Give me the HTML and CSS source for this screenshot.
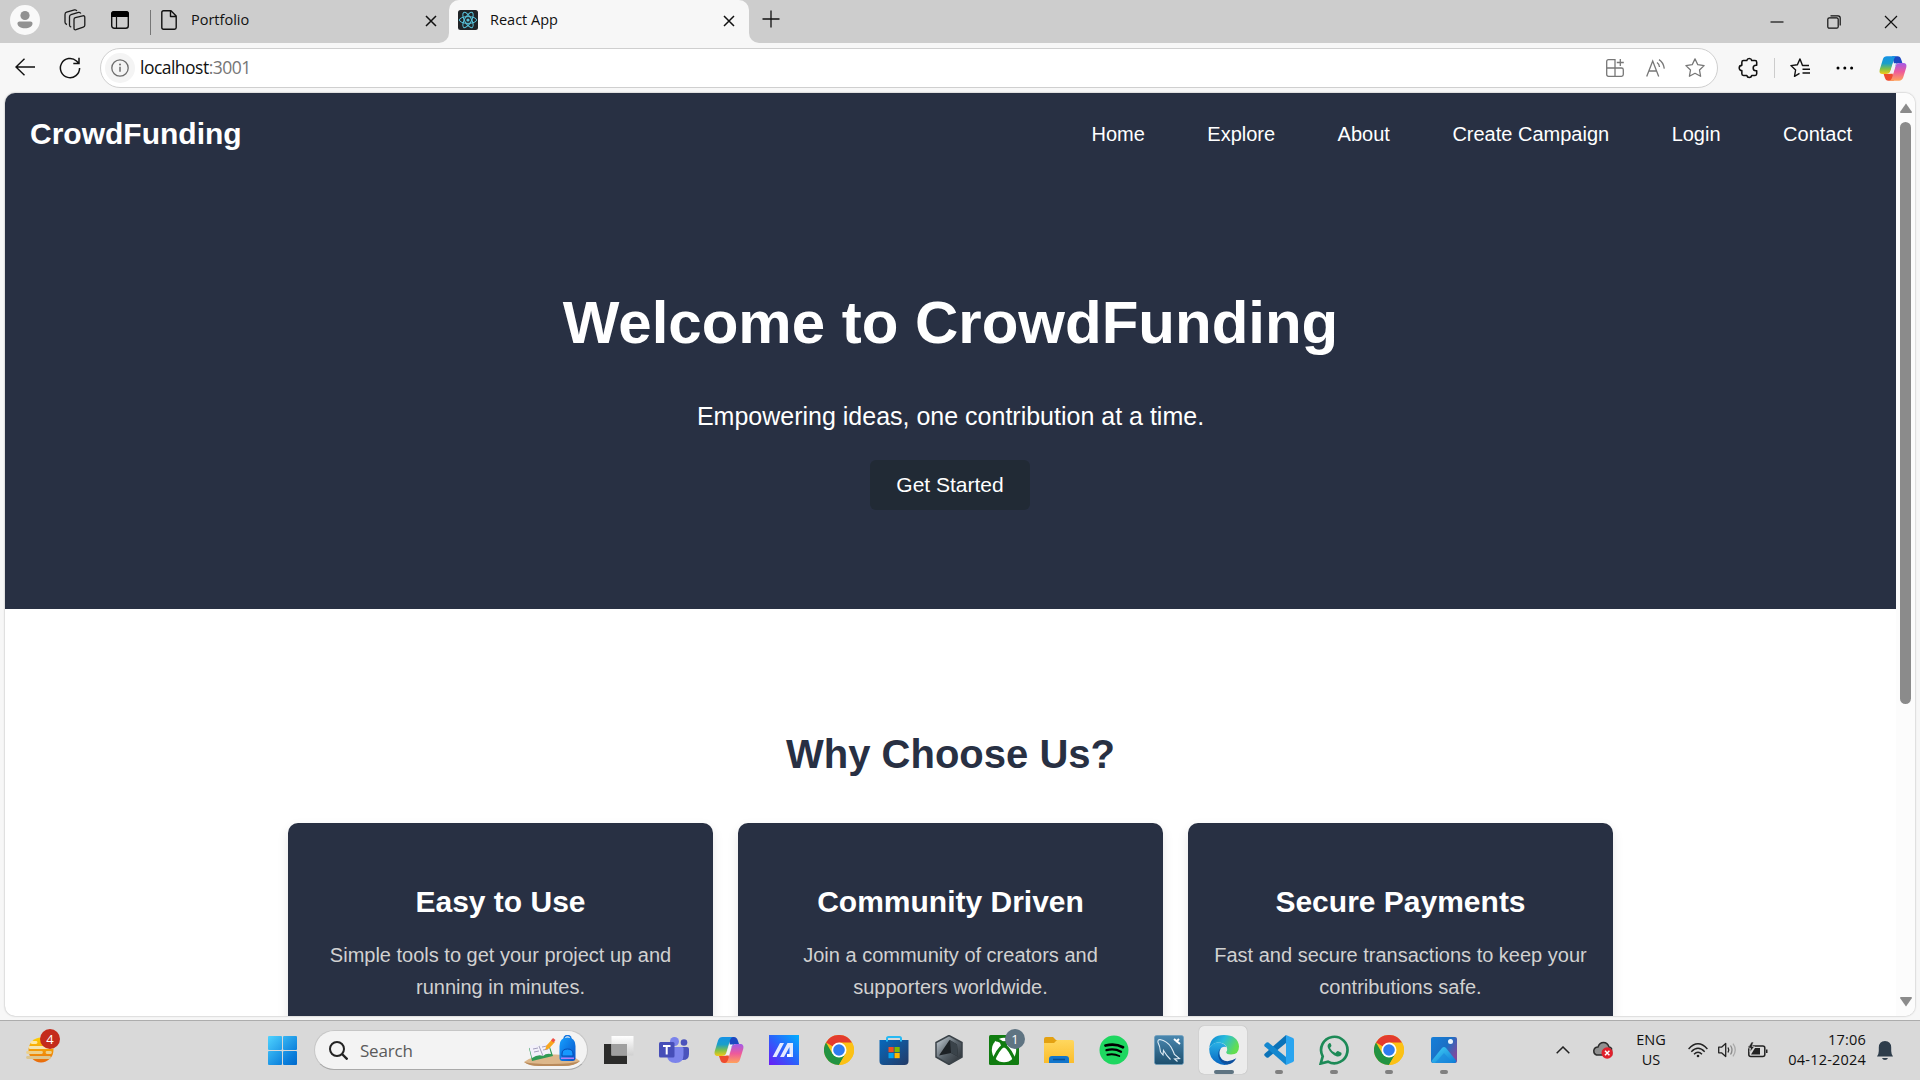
FILE: index.html
```html
<!DOCTYPE html>
<html lang="en">
<head>
<meta charset="utf-8">
<title>React App</title>
<link rel="stylesheet" href="styles.css">
</head>
<body>
<svg class="defs" aria-hidden="true">
  <defs>
    <linearGradient id="cpA" x1="0" y1="0" x2="0" y2="1"><stop offset="0" stop-color="#1592e6"/><stop offset=".4" stop-color="#1b9fc9"/><stop offset=".7" stop-color="#7fc04a"/><stop offset="1" stop-color="#f6c915"/></linearGradient>
    <linearGradient id="cpB" x1="0" y1="0" x2="0" y2="1"><stop offset="0" stop-color="#a25be8"/><stop offset=".5" stop-color="#ee5a9b"/><stop offset="1" stop-color="#ffa25c"/></linearGradient>
    <linearGradient id="win" gradientUnits="userSpaceOnUse" x1="0" y1="0" x2="29" y2="29"><stop offset="0" stop-color="#4fd3ff"/><stop offset=".75" stop-color="#0a7edb"/><stop offset="1" stop-color="#0069cc"/></linearGradient>
    <linearGradient id="ma" x1="0" y1="1" x2="1" y2="0"><stop offset="0" stop-color="#6a1cf5"/><stop offset=".5" stop-color="#2a62fb"/><stop offset="1" stop-color="#00b0ff"/></linearGradient>
    <linearGradient id="sun" x1="0" y1="0" x2="0" y2="1"><stop offset="0" stop-color="#ffcf05"/><stop offset="1" stop-color="#e8690c"/></linearGradient>
    <linearGradient id="store" x1="0" y1="0" x2="1" y2="1"><stop offset="0" stop-color="#0669bd"/><stop offset="1" stop-color="#233a66"/></linearGradient>
    <linearGradient id="folder" x1="0" y1="0" x2="0" y2="1"><stop offset="0" stop-color="#ffd75e"/><stop offset="1" stop-color="#fbbd2c"/></linearGradient>
    <linearGradient id="sql" x1="0" y1="0" x2="0" y2="1"><stop offset="0" stop-color="#4a88b0"/><stop offset="1" stop-color="#1d4f6e"/></linearGradient>
    <linearGradient id="edgeTop" x1="0" y1="0" x2="1" y2=".4"><stop offset="0" stop-color="#0c7fd0"/><stop offset=".5" stop-color="#28bbdc"/><stop offset="1" stop-color="#62de50"/></linearGradient>
    <linearGradient id="edgeBody" x1="0" y1="0" x2="0" y2="1"><stop offset="0" stop-color="#29b1e6"/><stop offset="1" stop-color="#0664c0"/></linearGradient>
    <linearGradient id="photo" x1="0" y1="0" x2="1" y2=".6"><stop offset="0" stop-color="#157fd9"/><stop offset=".6" stop-color="#1c6fc4"/><stop offset="1" stop-color="#7e4a9e"/></linearGradient>
    <linearGradient id="mount" x1="0" y1="0" x2="1" y2="1"><stop offset="0" stop-color="#43d4f8"/><stop offset="1" stop-color="#0d79d4"/></linearGradient>
    <linearGradient id="crate" x1="0" y1="0" x2="1" y2="1"><stop offset="0" stop-color="#d3dce3"/><stop offset=".5" stop-color="#59636b"/><stop offset="1" stop-color="#24292e"/></linearGradient>
    <linearGradient id="glass" x1="0" y1="0" x2="0" y2="1"><stop offset="0" stop-color="#fff"/><stop offset="1" stop-color="#d0d0d0"/></linearGradient>
    <linearGradient id="bag" x1="0" y1="0" x2="1" y2="1"><stop offset="0" stop-color="#16a0ff"/><stop offset="1" stop-color="#0751c8"/></linearGradient>
    <symbol id="copilot" viewBox="0 0 30 28">
      <path d="M14 1h6c2 0 3 1 4 4l1 3h-3c-3 0-4 2-5 4z" fill="#1c48c2"/>
      <path d="M16 27H10c-2 0-3-1-4-4l-1-3h5c2 0 3-1 4-4z" fill="#ee4c2f"/>
      <path d="M8.500 1H19c-2 .5-2.700 2-3.400 4.500L12.500 16c-.8 3-2.500 4-5 4H4c-3 0-4-2-3.200-5L4 4.600C4.800 2 6.300 1 8.500 1z" fill="url(#cpA)"/>
      <path d="M21.500 27H11c2-.5 2.700-2 3.400-4.500L17.500 12c.8-3 2.500-4 5-4H26c3 0 4 2 3.200 5L26 23.400c-.8 2.600-2.300 3.600-4.500 3.600z" fill="url(#cpB)"/>
      <path d="M15.200 8.500h4.200c-1.300.6-1.800 2-2.300 3.500l-2.300 7.500h-4.200c1.300-.6 1.700-1.800 2.200-3.300z" fill="#f2f2f5"/>
    </symbol>
    <symbol id="chrome" viewBox="0 0 30 30">
      <circle cx="15" cy="15" r="15" fill="#fbc116"/>
      <path d="M15 15 2 7.500A15 15 0 0 1 28 7.500z" fill="#e33b2e"/>
      <path d="M2 7.500A15 15 0 0 0 15 30l6.500-11.300L15 15 8.500 18.700z" fill="#229342"/>
      <path d="M15 7.500h13A15 15 0 0 1 15 30l6.500-11.300z" fill="#fbc116"/>
      <circle cx="15" cy="15" r="7.500" fill="#fff"/><circle cx="15" cy="15" r="5.800" fill="#2f7cf0"/>
    </symbol>
    <symbol id="x" viewBox="0 0 12 12"><path d="M1 1l10 10M11 1 1 11" fill="none" stroke="#111" stroke-width="1.500"/></symbol>
  </defs>
</svg>

<header class="tabstrip">
  <div class="tools">
    <svg class="avatar" viewBox="0 0 30 30"><circle cx="15" cy="15" r="15" fill="#f9f9f9"/><circle cx="15" cy="10.500" r="4.600" fill="#929292"/><path d="M9.500 16.500h11c1.200 0 2 .8 2 1.900 0 2.900-3.300 4.900-7.500 4.900s-7.500-2-7.500-4.900c0-1.100.8-1.900 2-1.900z" fill="#929292"/></svg>
    <svg class="i22 spaces" viewBox="0 0 22 22" fill="none" stroke="#1a1a1a" stroke-width="1.300" stroke-linejoin="round"><path d="M11.300 8.700 18.800 6.800q2-.4 2 1.600v7.800q0 1.400-1.500 1.900l-7.300 2.600q-2 .5-2-1.500v-8.700q0-1.500 1.300-1.800z"/><path d="M7.200 18q-1.700-.3-1.700-2V7.700q0-1.600 1.500-2L14.500 3.400q1.700-.4 2.300 1.200M3 15.500Q1 15 1 13.300V5.500q0-1.800 1.600-2.300l7.900-2.300Q12.200.5 12.900 2"/></svg>
    <svg class="i18 vtabs" viewBox="0 0 18 18"><rect x=".7" y=".7" width="16.600" height="16.600" rx="2.500" fill="none" stroke="#111" stroke-width="1.400"/><path d="M0 6V3q0-3 3-3h12q3 0 3 3v3z" fill="#000"/><path d="M5.500 5v12" stroke="#111" stroke-width="1.200"/></svg>
    <span class="divider"></span>
  </div>
  <div class="tab">
    <svg class="page" viewBox="0 0 16 20" fill="none" stroke="#111" stroke-width="1.400" stroke-linejoin="round"><path d="M2.500.8H10l5.200 5.200v11.500q0 1.700-1.700 1.700h-11Q.8 19.200.8 17.500v-15Q.8.8 2.500.8zM9.500 1v5.500H15"/></svg>
    <span class="title">Portfolio</span>
    <svg class="close"><use href="#x"/></svg>
  </div>
  <div class="tab active">
    <svg class="fav" viewBox="0 0 20 20"><rect width="20" height="20" rx="2.500" fill="#202427"/><g fill="none" stroke="#58c4dc" stroke-width="1"><ellipse cx="10" cy="10" rx="8.600" ry="3.400"/><ellipse cx="10" cy="10" rx="8.600" ry="3.400" transform="rotate(60 10 10)"/><ellipse cx="10" cy="10" rx="8.600" ry="3.400" transform="rotate(120 10 10)"/></g><circle cx="10" cy="10" r="1.600" fill="#58c4dc"/></svg>
    <span class="title">React App</span>
    <svg class="close"><use href="#x"/></svg>
  </div>
  <svg class="i18 plus" viewBox="0 0 18 18"><path d="M9 .5v17M.5 9h17" stroke="#111" stroke-width="1.300"/></svg>
  <div class="window">
    <svg viewBox="0 0 14 14"><path d="M.5 7h13" stroke="#111" stroke-width="1.200"/></svg>
    <svg viewBox="0 0 14 14" fill="none" stroke="#111" stroke-width="1.200"><rect x=".8" y="2.800" width="10.400" height="10.400" rx="1.500"/><path d="M3.500.8H11q2.200 0 2.200 2.200v7.500"/></svg>
    <svg viewBox="0 0 14 14"><path d="M1 1l12 12M13 1 1 13" stroke="#111" stroke-width="1.200"/></svg>
  </div>
</header>

<div class="toolbar">
  <svg class="back" viewBox="0 0 20 18" fill="none" stroke="#111" stroke-width="1.400"><path d="M20 9H1M9.500.7 1 9l8.500 8.300"/></svg>
  <svg class="reload" viewBox="0 0 22 22" fill="none" stroke="#111" stroke-width="1.500"><path d="M20.600 11A9.600 9.600 0 1 1 17.500 4l2 2M20 .8v5.700h-5.700"/></svg>
  <div class="address">
    <span class="site"><svg viewBox="0 0 18 18"><circle cx="9" cy="9" r="8.200" fill="none" stroke="#6d6d6d" stroke-width="1.300"/><path d="M9 7.800v5" stroke="#6d6d6d" stroke-width="1.500"/><circle cx="9" cy="5.500" r="1" fill="#6d6d6d"/></svg></span>
    <span class="url">localhost<span class="port">:3001</span></span>
    <svg class="i18 apps" viewBox="0 0 18 18" fill="none" stroke="#777" stroke-width="1.300"><path d="M9 17.300H2.500Q.7 17.300.7 15.500v-13Q.7.700 2.500.7H9zM.7 9h14.800q1.800 0 1.800 1.800v4.700q0 1.800-1.800 1.800H9M14.300 0v7M10.800 3.500h7"/></svg>
    <svg class="read" viewBox="0 0 20 18" fill="none" stroke="#777" stroke-width="1.300"><path d="M.7 17.500 6.700 2l6 15.500M2.700 12h8M11 3.500q2.300 1.500 2.500 4.500M13 .6q4.500 2.800 5.300 9"/></svg>
    <svg class="star" viewBox="0 0 20 20" fill="none" stroke="#777" stroke-width="1.300" stroke-linejoin="round"><path d="M10 .9l2.800 5.800 6.300.9-4.600 4.400 1.100 6.300L10 15.300l-5.600 3 1.100-6.300L.9 7.600l6.300-.9z"/></svg>
  </div>
  <svg class="ext" viewBox="0 0 20 20" fill="none" stroke="#111" stroke-width="1.400" stroke-linejoin="round"><path d="M5 3.200H8A2.300 2.300 0 0 1 12.500 3.200H15.500q1.500 0 1.500 1.500V7.500h-.7a2.500 2.500 0 0 0 0 5h.7v2.800q0 1.500-1.500 1.500H12.500a2.300 2.300 0 0 1-4.500 0H5q-1.500 0-1.500-1.500V12.400a2.400 2.400 0 0 1 0-4.800V4.700q0-1.500 1.500-1.500z"/></svg>
  <span class="bar"></span>
  <svg class="favs" viewBox="0 0 20 20" fill="none" stroke="#111" stroke-width="1.400" stroke-linejoin="round"><path d="M19 7.500h-6.500L10 .9 7.400 6.700l-6.500.9 4.700 4.400-1.100 6.300 5-3M12.500 11.300H20M12.500 15H20"/></svg>
  <svg class="dots" viewBox="0 0 18 4"><circle cx="2" cy="2" r="1.500"/><circle cx="8.800" cy="2" r="1.500"/><circle cx="15.600" cy="2" r="1.500"/></svg>
  <svg class="cp"><use href="#copilot"/></svg>
</div>

<div class="frame">
  <main class="site-page">
    <section class="hero">
      <nav class="nav">
        <span class="logo">CrowdFunding</span>
        <ul class="links"><li>Home</li><li>Explore</li><li>About</li><li>Create Campaign</li><li>Login</li><li>Contact</li></ul>
      </nav>
      <h1>Welcome to CrowdFunding</h1>
      <p class="lead">Empowering ideas, one contribution at a time.</p>
      <button class="cta">Get Started</button>
    </section>
    <section class="features">
      <h2>Why Choose Us?</h2>
      <div class="cards">
        <article class="card"><h3>Easy to Use</h3><p>Simple tools to get your project up and running in minutes.</p></article>
        <article class="card"><h3>Community Driven</h3><p>Join a community of creators and supporters worldwide.</p></article>
        <article class="card"><h3>Secure Payments</h3><p>Fast and secure transactions to keep your contributions safe.</p></article>
      </div>
    </section>
  </main>
  <div class="scrollbar">
    <svg viewBox="0 0 12 10"><path d="M6 .5 12 9q0 1-1 1H1Q0 10 0 9z" fill="#8b8b8b"/></svg>
    <span class="thumb"></span>
    <svg viewBox="0 0 12 10"><path d="M6 9.500 12 1q0-1-1-1H1Q0 0 0 1z" fill="#8b8b8b"/></svg>
  </div>
</div>

<footer class="taskbar">
  <div class="widget">
    <svg viewBox="0 0 28 26"><circle cx="15" cy="13" r="12.500" fill="url(#sun)"/><g stroke-linecap="round" stroke-width="2.800" fill="none"><path d="M6 5.500h4" stroke="#ffe9a0"/><path d="M4 10.500h22" stroke="#f5e5b0"/><path d="M1.500 15.500h14M21 15.500h3.500" stroke="#ecd08c"/><path d="M1.500 20.500h22" stroke="#ddc68f"/></g></svg>
    <span class="count">4</span>
  </div>
  <div class="cell"><svg class="i29" viewBox="0 0 29 29" fill="url(#win)"><rect width="14" height="14" rx="1"/><rect x="15" width="14" height="14" rx="1"/><rect y="15" width="14" height="14" rx="1"/><rect x="15" y="15" width="14" height="14" rx="1"/></svg></div>
  <div class="search">
    <svg class="glass" viewBox="0 0 19 19" fill="none" stroke="#222" stroke-width="2"><circle cx="8" cy="8" r="7"/><path d="M13 13l5.500 5.500" stroke-width="2.400"/></svg>
    <span>Search</span>
    <svg class="school" viewBox="0 0 58 32"><path d="M1 27Q10 20 30 19.500T57 26Q52 31 40 31H16Q6 31 1 27z" fill="#dcb78b"/><path d="M1 27q9 2 28 2t28-3q-5 5-17 5H16Q6 31 1 27z" fill="#b98a5b"/><path d="M6 13l20-4 4 12-21 5z" fill="#2f9a55"/><path d="M6 11q6-3 10 0 4-4 9-3l3 11q-5-1-8 2-5-2-11 2z" fill="#f2f0fa"/><path d="M16 11l4 10M10 14l5-1M11 17l5-1M19 12l5-1M20 15l5-1" stroke="#a49fbd" fill="none"/><path d="M22 15l1.500-4.500L29 4.500l3 2.500-6 6.500z" fill="#f9a61c"/><path d="M28 5.500 30 3l2.500 2-2 2.500z" fill="#ef5148"/><path d="M41 4q0-3.500 3.500-3.500T48 4" fill="none" stroke="#1677e0" stroke-width="1.500"/><path d="M36.500 11q0-8.500 8-8.500t8 8.500v12q0 3-3 3h-10q-3 0-3-3z" fill="url(#bag)"/><path d="M39 19q0-5 5.500-5t5.500 5v2H39z" fill="#1698ff" stroke="#074cb5"/><path d="M38 22.500h13v1.500H38z" fill="#b47cf5"/></svg>
  </div>
  <div class="cell"><svg class="i30" viewBox="0 0 30 30"><path d="M0 9h23v20H0z" fill="#2c2c2b"/><path d="M7.500 1h22v19.500h-22z" fill="url(#glass)"/><path d="M7.500 9H23v11.500H7.500z" fill="#a0a0a0"/></svg></div>
  <div class="cell"><svg class="i30" viewBox="0 0 30 30"><circle cx="25" cy="7.500" r="3.300" fill="#4b53bc"/><path d="M20 12h8q2 0 2 2v5q0 6-6 6h-4z" fill="#4b53bc"/><circle cx="15.500" cy="6.500" r="4.500" fill="#7b83eb"/><path d="M9 12h14q1.500 0 1.500 1.500V20q0 8-8 8T8 20v-8z" fill="#7b83eb"/><rect y="7" width="15.500" height="15.500" rx="1.500" fill="#464eb8"/><path d="M4 11h7.500M7.700 11v8.500" stroke="#fff" stroke-width="2"/></svg></div>
  <div class="cell"><svg class="i30"><use href="#copilot"/></svg></div>
  <div class="cell"><svg class="i30" viewBox="0 0 30 30"><rect width="30" height="30" fill="url(#ma)"/><path d="M3.500 22 11 8h4L7.500 22zM11 22l7.500-14H24v14h-3.500V12L15 22z" fill="#e4eaff"/><path d="M18 19h4v3h-4z" fill="#fff"/></svg></div>
  <div class="cell"><svg class="i30"><use href="#chrome"/></svg></div>
  <div class="cell"><svg class="i30" viewBox="0 0 30 30"><path d="M8 7V3.500Q8 2 9.500 2h11Q22 2 22 3.500V7" fill="none" stroke="#27b9f3" stroke-width="2"/><path d="M.5 5h29v21q0 4-4 4h-21q-4 0-4-4z" fill="url(#store)"/><path d="M8 5v1.500M22 5v1.500" stroke="#27b9f3" stroke-width="2"/><path d="M9.500 12h5.200v5.200H9.500z" fill="#f25022"/><path d="M15.500 12h5.200v5.200h-5.200z" fill="#7fba00"/><path d="M9.500 18h5.200v5.200H9.500z" fill="#00a4ef"/><path d="M15.500 18h5.200v5.200h-5.200z" fill="#ffb900"/></svg></div>
  <div class="cell"><svg class="i30" viewBox="0 0 30 30"><path d="M15 .5 28 7.500v14.500L15 29.500 2 22V7.500z" fill="url(#crate)"/><path d="M15.500 5 5 20.500l12-2.500 7 3.500-1-12z" fill="#1c2125"/><path d="M16 5l1 13 7 3.500-1-12z" fill="#3a434a"/><path d="M15 .5 28 7.500v14.500L15 29.500 2 22V7.500z" fill="none" stroke="#3a4248" stroke-width="1.500"/></svg></div>
  <div class="cell"><svg class="i30" viewBox="0 0 30 30"><rect width="30" height="30" rx="1.500" fill="#107c10"/><circle cx="15" cy="15" r="12.200" fill="#fff"/><g fill="none" stroke="#107c10"><path d="M4.500 26Q8 15 15 10q7 5 10.500 16" stroke-width="3"/><path d="M7 5q4 0 8 4.500Q19 5 23 5" stroke-width="3"/></g><path d="M11 7.500 15 6l4 1.500-1.500 5h-5z" fill="#107c10"/></svg><span class="badge">1</span></div>
  <div class="cell"><svg class="i30" viewBox="0 0 30 30"><path d="M0 4q0-2 2-2h7l3 3h10v7H0z" fill="#e3a112"/><path d="M0 8h10l3-3h15q2 0 2 2v21H0z" fill="url(#folder)"/><path d="M5 28v-4q0-3 3-3h14q3 0 3 3v4z" fill="#1276cc"/><path d="M9 24.500h12" stroke="#084f93" stroke-width="1.500"/></svg></div>
  <div class="cell"><svg class="i30" viewBox="0 0 30 30"><circle cx="15" cy="15" r="14.500" fill="#1ed760"/><g fill="none" stroke="#000" stroke-linecap="round"><path d="M6.500 10.500q9.500-2.500 17.500 1.700" stroke-width="2.800"/><path d="M7.500 15.200q8-2 14.500 1.500" stroke-width="2.300"/><path d="M8.300 19.700q6.500-1.500 12 1.300" stroke-width="1.900"/></g></svg></div>
  <div class="cell"><svg class="i30" viewBox="0 0 30 30"><rect x=".5" y=".5" width="29" height="29" rx="2" fill="url(#sql)" stroke="#6c9dbd" stroke-width=".7"/><path d="M6.500 17Q6 11 4 7.500 3.500 4.500 6 4.500 13 6 17 12q2.500 4.500 3.500 7.500l5 4-5 .5 3 2.500M6.500 17l2.500 3 .5-4.500q3 5 7 9" fill="none" stroke="#dfecf5" stroke-width="1.100"/><path d="M20 4l6 5M25 4l-3 3" stroke="#fff" stroke-width="2"/></svg></div>
  <div class="cell current"><svg class="i30" viewBox="0 0 30 30"><path d="M.3 13Q1.500 0 15 0q14 0 15 11.500 0 8-8 8-5 0-4.800-2.500Q19 15 17.500 11.500 15 7.500 9 7.500 3 8 .3 13z" fill="url(#edgeTop)"/><path d="M.2 13.500Q2.500 7.500 9.500 7.500q6 .5 8 4.500-5.500-1-7 4Q9.500 24 19 29.500 13 31 7.500 27.500 0 23 .2 13.500z" fill="url(#edgeBody)"/><path d="M12 13q-4.500 6.500 1 11.500 5.500 4 14.300-1.200Q24 29 18.500 29.600 10.500 28 9.200 21 8.800 15.500 12 13z" fill="#0c4f9e"/></svg><i class="run wide"></i></div>
  <div class="cell"><svg class="i30" viewBox="0 0 30 30"><path d="M22 0v8L4.500 22.500q-1 .7-2 0L.6 20.800q-.8-1 0-2z" fill="#0a72b8"/><path d="M22 30v-8L4.500 7.500q-1-.7-2 0L.6 9.200q-.8 1 0 2z" fill="#1387cf"/><path d="M22 0l7 3q1 .6 1 1.800v20.400q0 1.200-1 1.800l-7 3z" fill="#2aa5f0"/></svg><i class="run"></i></div>
  <div class="cell"><svg class="i30" viewBox="0 0 30 30"><path d="M1.700 28.500 3.700 21.300A13.200 13.200 0 1 1 9 26.600z" fill="none" stroke="#1d8a57" stroke-width="2.700"/><path d="M10.500 8q-2.800 1.500-1.500 5 3 6.500 9 8.500 3.500.5 4.500-2 .3-1.800-.5-2l-3-1.500q-.7-.2-1.200.5L16.500 18q-4-1.500-5.500-5l1.300-1.800q.2-.7 0-1.200l-.8-1.700q-.3-.5-1-.3z" fill="#1d8a57"/></svg><i class="run"></i></div>
  <div class="cell"><svg class="i30"><use href="#chrome"/></svg><i class="run"></i></div>
  <div class="cell"><svg class="i30" viewBox="0 0 30 30"><rect x="2" y="2" width="26" height="26" rx="2" fill="url(#photo)"/><path d="M2.500 26 13 13q2-2 4 0L27.500 26q-.5 2-2 2h-21q-1.500 0-2-2z" fill="url(#mount)"/><path d="M15 18 6 28h18z" fill="#1b86db" opacity=".6"/><circle cx="21.500" cy="6.500" r="2.500" fill="#e9f3fb"/></svg><i class="run"></i></div>
  <div class="tray">
    <svg class="chev" viewBox="0 0 14 8"><path d="M.7 7.300 7 1l6.300 6.300" fill="none" stroke="#222" stroke-width="1.500"/></svg>
    <svg class="cloud" viewBox="0 0 20 18"><path d="M3.500 14Q.6 13 .8 9.500 1.500 6 5 6 6.500 1.500 10.500 1.500T16 6q1.500 0 2.500 1.500V14z" fill="#909090" stroke="#2d2d2d" stroke-width="1.500"/><circle cx="14.200" cy="12" r="5.700" fill="#e0202c"/><path d="M12 9.800l4.400 4.400M16.400 9.800 12 14.200" stroke="#fff" stroke-width="1.500"/></svg>
    <div class="lang">ENG<br>US</div>
    <svg class="wifi" viewBox="0 0 20 15" fill="none" stroke="#222" stroke-width="1.400"><path d="M.6 6Q10-4.500 19.400 6M3.300 8.700q6.700-7 13.400 0M6 11.300q4-4 8 0"/><circle cx="10" cy="13" r="1.300" fill="#222" stroke="none"/></svg>
    <svg class="vol" viewBox="0 0 20 16" fill="none" stroke="#222" stroke-width="1.300" stroke-linejoin="round"><path d="M.7 5.200H3.500L7.700 1.500v13L3.500 10.800H.7zM10 5.500q1.600 2.500 0 5"/><path d="M12.500 3.500q3 4.500 0 9" stroke="#888"/><path d="M15 1.700q4.500 6.300 0 12.600" stroke="#aaa"/></svg>
    <svg class="batt" viewBox="0 0 20 16"><rect x=".8" y="4" width="16" height="10.500" rx="2" fill="none" stroke="#222" stroke-width="1.500"/><path d="M18 7.500h1.500v3.500H18z" fill="#222"/><path d="M3 12.500 7 6h5v6.500z" fill="#222"/><path d="M3.500 0 0 6h2.500L2 10l4.500-5.500H4L5.500 0z" fill="#222" stroke="#d9d9d9" stroke-width=".6"/></svg>
    <div class="clock">17:06<br>04-12-2024</div>
    <svg class="bell" viewBox="0 0 16 19"><path d="M0 15.500Q1.800 13 1.800 10V6.500Q2 0 8 0t6.200 6.500V10q0 3 1.800 5.500zM5 17h6q-.7 2-3 2t-3-2z" fill="#2e3d4b"/></svg>
  </div>
</footer>
</body>
</html>
```
FILE: styles.css
```css
* { box-sizing: border-box; }
body {
  margin: 0;
  width: 1920px;
  height: 1080px;
  overflow: hidden;
  display: flex;
  flex-direction: column;
  background: #f7f7f7;
  font-family: "Open Sans", "Noto Sans", sans-serif;
  color: #111;
}
svg { display: block; flex: none; }
.defs { position: absolute; width: 0; height: 0; }
.i18 { width: 18px; height: 18px; }
.i22 { width: 22px; height: 22px; }
.i29 { width: 29px; height: 29px; }
.i30 { width: 30px; height: 30px; }

/* Tab strip */
.tabstrip { height: 43px; display: flex; background: #f7f7f7; }
.tools { width: 155px; height: 43px; padding-left: 10px; padding-bottom: 3px; display: flex; align-items: center; background: #cdcdcd; }
.avatar { width: 30px; height: 30px; }
.spaces { margin-left: 24px; }
.vtabs { margin-left: 25px; }
.divider { width: 1px; height: 25px; margin-left: 21px; margin-top: 4px; background: #777; }
.tab { width: 294px; height: 43px; padding: 0 12px 3px 6px; display: flex; align-items: center; background: #cdcdcd; border-bottom-right-radius: 10px; font-size: 14.500px; }
.tab .title { flex: 1; padding-bottom: 2px; }
.page { width: 16px; height: 20px; margin-right: 14px; }
.close { width: 12px; height: 12px; margin-top: 1px; }
.tab.active { width: 300px; padding: 0 14px 3px 9px; background: #f7f7f7; border-radius: 10px 10px 0 0; box-shadow: 0 -12px 0 #cdcdcd; }
.fav { width: 20px; height: 20px; margin-right: 12px; }
.plus { width: 52px; height: 43px; padding: 10px 21px 15px 13px; background: #cdcdcd; border-bottom-left-radius: 10px; }
.window { flex: 1; padding-right: 22px; display: flex; justify-content: flex-end; align-items: center; gap: 43px; background: #cdcdcd; }
.window svg { width: 14px; height: 14px; }

/* Toolbar */
.toolbar { height: 50px; display: flex; align-items: center; padding-left: 15px; }
.back { width: 20px; height: 18px; margin-top: -2px; }
.reload { width: 22px; height: 22px; margin-left: 24px; }
.address { width: 1618px; height: 40px; margin-left: 19px; padding: 0 12px 0 4px; display: flex; align-items: center; background: #fff; border: 1px solid #cfcfcf; border-radius: 20px; }
.site { width: 30px; height: 30px; display: grid; place-items: center; border-radius: 50%; background: #f4f4f4; }
.site svg { width: 18px; height: 18px; }
.url { flex: 1; margin-left: 5px; padding-bottom: 2px; font-size: 17.500px; letter-spacing: -.52px; }
.port { color: #767676; }
.read { width: 20px; height: 18px; margin-left: 22px; }
.star { width: 20px; height: 20px; margin-left: 19px; }
.ext { width: 22px; height: 22px; margin-left: 20px; }
.bar { width: 1px; height: 20px; margin-left: 14px; background: #ccc; }
.favs { width: 20px; height: 20px; margin-left: 15px; }
.dots { width: 18px; height: 4px; margin-left: 26px; }
.cp { width: 28px; height: 27px; margin-left: 25px; }

/* Browser viewport */
.frame { width: 1910px; height: 923px; margin-left: 5px; display: flex; overflow: hidden; background: #fff; border-radius: 10px; box-shadow: 0 0 2px rgba(0, 0, 0, .35); flex: none; }
.site-page { width: 1891px; overflow: hidden; font-family: "Liberation Sans", Arial, sans-serif; }
.hero { height: 516px; display: flex; flex-direction: column; align-items: center; background: #283043; color: #fff; }
.nav { width: 100%; height: 81px; padding: 0 44px 0 25px; display: flex; justify-content: space-between; align-items: center; }
.logo { font-size: 30px; font-weight: 700; }
.links { display: flex; gap: 62.500px; margin: 0; padding: 2px 0 0; list-style: none; font-size: 20px; }
h1 { margin: 114px 0 0; font-size: 60px; line-height: 69px; }
.lead { margin: 44px 0 0; font-size: 25px; line-height: 30px; }
.cta { width: 160px; height: 50px; margin: 29px 1px 0 0; padding: 0; border: 0; border-radius: 6px; background: #212a35; color: #fff; font: 21px "Liberation Sans", Arial, sans-serif; }
.features { height: 500px; padding-top: 122px; text-align: center; }
h2 { margin: 0; font-size: 40px; line-height: 46px; color: #283043; }
.cards { display: flex; justify-content: center; gap: 25px; margin-top: 46px; }
.card { width: 425px; height: 260px; padding: 61px 25px 0; border-radius: 10px; background: #283043; box-shadow: 0 5px 12px rgba(0, 0, 0, .1); }
.card h3 { margin: 0 0 19px; font-size: 30px; line-height: 36px; color: #fff; }
.card p { margin: 0; font-size: 20px; line-height: 32px; color: #d1d1d1; }
.scrollbar { width: 19px; padding: 10px 0 9px; display: flex; flex-direction: column; align-items: center; background: #fcfcfc; }
.scrollbar svg { width: 12px; height: 10px; }
.thumb { width: 11px; height: 582px; margin: 9px 0 auto; border-radius: 6px; background: #8b8b8b; }

/* Taskbar */
.taskbar { height: 60px; margin-top: 4px; padding-bottom: 1px; display: flex; align-items: center; background: #d9d9d9; border-top: 1px solid #adadad; flex: none; }
.widget { position: relative; width: 255px; padding-left: 26px; flex: none; }
.widget svg { width: 28px; height: 26px; }
.count { position: absolute; left: 40px; top: -8px; width: 20px; height: 20px; border-radius: 50%; background: #c42b1c; color: #fff; font-size: 13px; line-height: 20px; text-align: center; }
.cell { position: relative; width: 55px; height: 48px; display: flex; align-items: center; justify-content: center; flex: none; }
.search { width: 274px; height: 40px; margin: 0 3px 0 4px; padding: 0 6px 0 14px; display: flex; align-items: center; background: #f3f3f3; border: 1px solid #c6c6c6; border-bottom-color: #a9a9a9; border-radius: 20px; font-size: 17px; color: #5a5a5a; flex: none; }
.search span { flex: 1; margin-left: 12px; letter-spacing: -.2px; }
.glass { width: 19px; height: 19px; }
.school { width: 58px; height: 32px; margin-top: 2px; }
.badge { position: absolute; left: 29px; top: 3px; width: 20px; height: 20px; border-radius: 50%; background: #5f7482; color: #fff; font-size: 13px; line-height: 20px; text-align: center; }
.current::before { content: ""; position: absolute; left: 3px; top: 0; width: 48px; height: 48px; border-radius: 5px; background: #ececec; box-shadow: 0 0 1px #999; }
.current svg { position: relative; }
.run { position: absolute; bottom: 0; left: 24px; width: 8px; height: 4px; border-radius: 2px; background: #808080; }
.run.wide { left: 18px; width: 20px; background: #5f7482; }
.tray { flex: 1; display: flex; align-items: center; padding-left: 85px; font-size: 14.500px; line-height: 20px; }
.chev { width: 14px; height: 8px; }
.cloud { width: 20px; height: 18px; margin-left: 23px; }
.lang { width: 40px; margin-left: 18px; text-align: center; }
.wifi { width: 20px; height: 15px; margin-left: 17px; }
.vol { width: 20px; height: 16px; margin-left: 10px; }
.batt { width: 20px; height: 16px; margin-left: 10px; }
.clock { width: 98px; text-align: right; letter-spacing: .2px; }
.bell { width: 16px; height: 19px; margin-left: 11px; }
```
